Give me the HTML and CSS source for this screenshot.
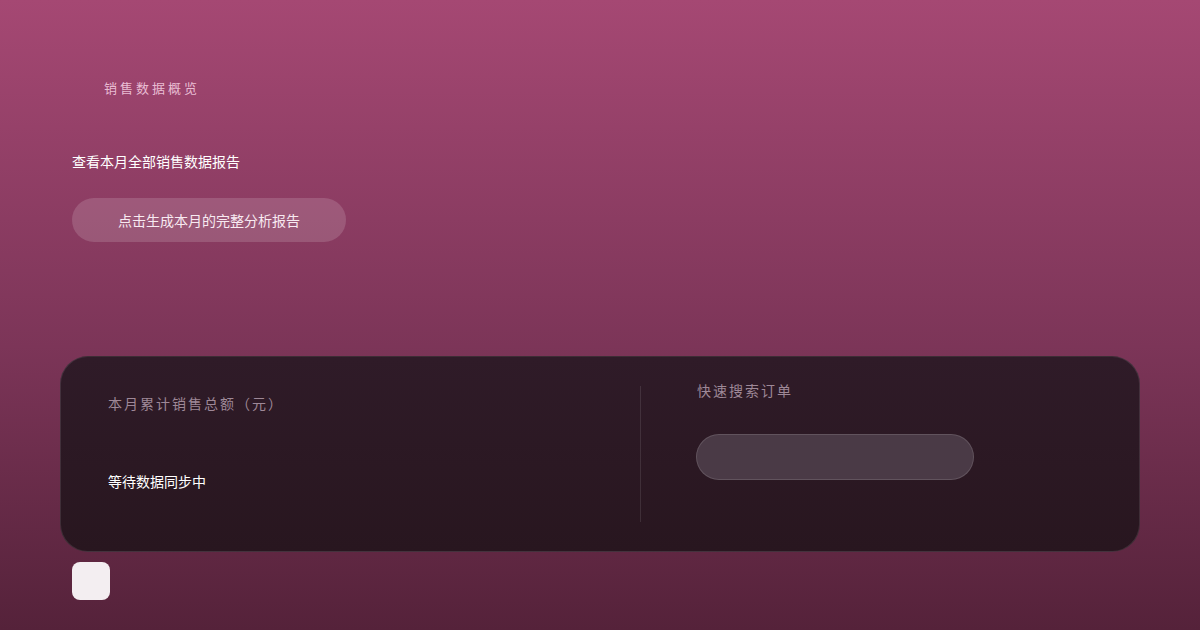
FILE: index.html
```html
<!DOCTYPE html>
<html lang="zh-CN">
  <head>
    <meta charset="UTF-8" />
    <meta name="viewport" content="width=device-width, initial-scale=1.0" />
    <title>销售数据概览</title>
    <link rel="stylesheet" href="styles.css">
  </head>
  <body>
    <div class="page">
      <div class="hero">
        <div class="eyebrow">销售数据概览</div>
        <p class="intro">查看本月全部销售数据报告</p>
        <button class="pill">点击生成本月的完整分析报告</button>
      </div>

      <div class="panel">
        <div class="panel-left">
          <div class="label">本月累计销售总额（元）</div>
          <div class="value">等待数据同步中</div>
        </div>
        <div class="divider"></div>
        <div class="panel-right">
          <div class="label label-right">快速搜索订单</div>
          <input type="text" class="field" />
        </div>
      </div>

      <div class="chip"></div>
    </div>
  </body>
</html>
```

FILE: styles.css
```css
* {
  box-sizing: border-box;
}

html,
body {
  margin: 0;
  height: 100%;
}

body {
  font-family: "Noto Sans", "Noto Sans CJK SC", sans-serif;
  font-size: 14px;
  color: #fff;
  background: linear-gradient(180deg, #a54873 0%, #7c3558 55%, #55223a 100%);
}

.page {
  padding: 76px 60px 0;
}

.hero {
  padding: 0 12px;
}

.eyebrow {
  padding-left: 32px;
  font-size: 13px;
  line-height: 24px;
  letter-spacing: 3px;
  color: rgba(255, 222, 238, 0.8);
}

.intro {
  margin: 50px 0 0;
  line-height: 24px;
}

.pill {
  margin-top: 24px;
  width: 274px;
  height: 44px;
  border: none;
  border-radius: 22px;
  background: rgba(255, 255, 255, 0.15);
  color: #f8eaf1;
  font-family: inherit;
  font-size: 14px;
  cursor: pointer;
}

.panel {
  margin-top: 114px;
  height: 196px;
  display: grid;
  grid-template-columns: 1fr 1px 395px;
  column-gap: 56px;
  padding: 24px 47px;
  border: 1px solid rgba(255, 255, 255, 0.1);
  border-radius: 28px;
  background: linear-gradient(180deg, #2f1b28 0%, #28161f 100%);
}

.label {
  margin-top: 13px;
  line-height: 20px;
  letter-spacing: 2px;
  color: #9e8897;
}

.label-right {
  margin-top: 0;
}

.value {
  margin-top: 58px;
  line-height: 20px;
}

.divider {
  margin: 5px 0;
  background: rgba(255, 255, 255, 0.1);
}

.field {
  display: block;
  margin: 33px 0 0 -1px;
  width: 278px;
  height: 46px;
  border: 1px solid rgba(255, 255, 255, 0.13);
  border-radius: 23px;
  background: #4a3a46;
  color: #fff;
  outline: none;
}

.chip {
  margin: 10px 0 0 12px;
  width: 38px;
  height: 38px;
  border-radius: 8px;
  background: #f3eef1;
}
```
